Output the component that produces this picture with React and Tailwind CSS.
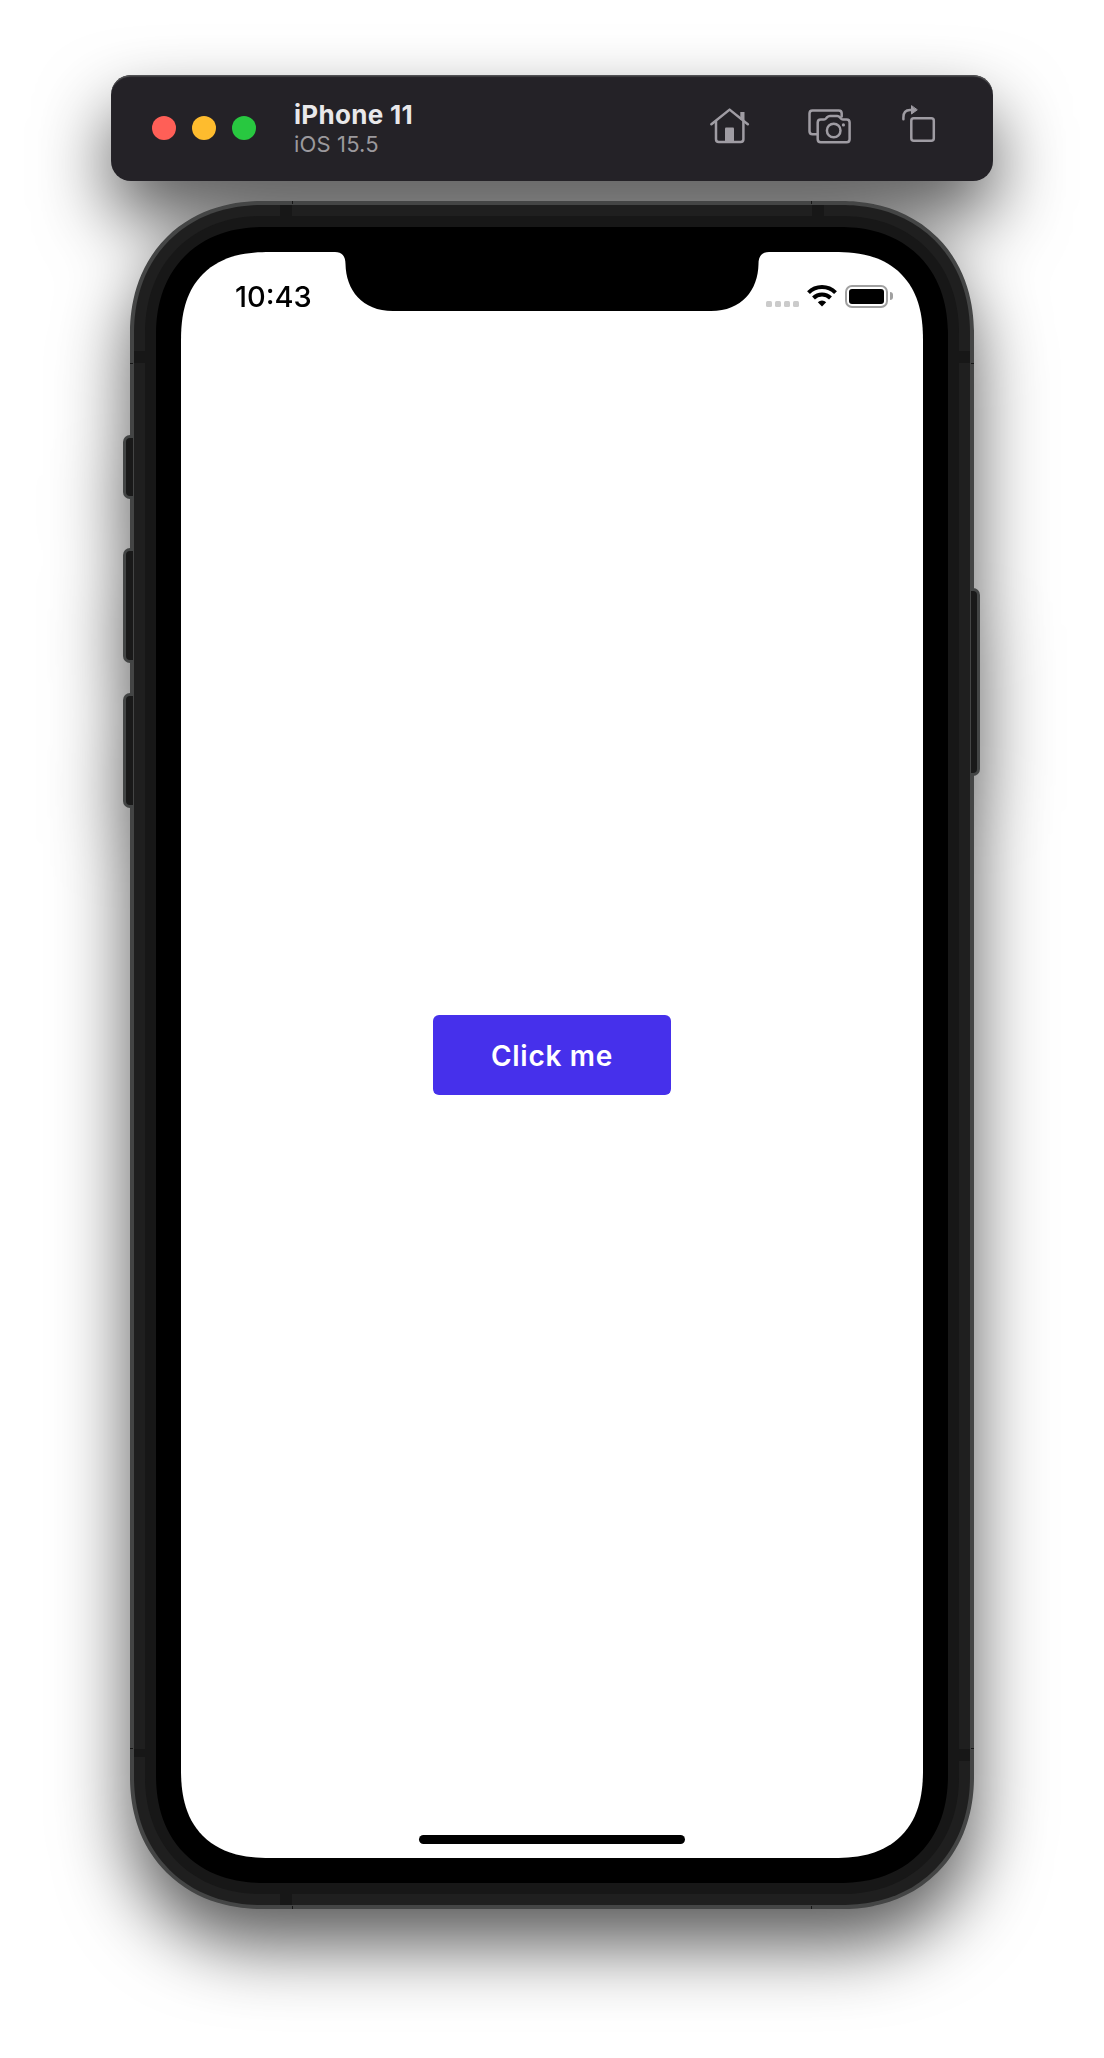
const ICON = "#9f9ca3";

function HomeIcon() {
  return (
    <svg width="40" height="38" viewBox="0 0 40 38" fill="none" stroke={ICON} strokeWidth="2.5" strokeLinecap="round" strokeLinejoin="round">
      <path d="M1.400 17.300 19.600 2.600 37.800 17.300" />
      <path d="M6 14.500v17.700q0 2.700 2.700 2.700h22q2.700 0 2.700-2.700V14.500" />
      <path d="M32.400 5v8" strokeWidth="4.200" strokeLinecap="butt" />
      <path d="M15 35V21.500q0-1 1-1h7q1 0 1 1V35z" fill={ICON} stroke="none" />
    </svg>
  );
}

function ScreenshotIcon() {
  return (
    <svg width="44" height="36" viewBox="0 0 44 36" fill="none" stroke={ICON} strokeWidth="2.500" strokeLinecap="round" strokeLinejoin="round">
      <path d="M9 26.300H4.500q-3 0-3-3V5.500q0-3 3-3h26.200q3 0 3 3v3" />
      <path d="M12.700 11.500h3.300q1.200 0 2-1l1.200-1.400Q20.400 7.900 22 7.900h7.200q1.500 0 2.500 1.200l1.200 1.400q.8 1 2 1H38.600q3 0 3 3V31.200q0 3-3 3H12.700q-3 0-3-3V14.500q0-3 3-3z" />
      <circle cx="25.700" cy="22.500" r="6.800" />
      <circle cx="35.400" cy="16.900" r="1.600" fill={ICON} stroke="none" />
    </svg>
  );
}

function RotateIcon() {
  return (
    <svg width="34" height="38" viewBox="0 0 34 38" fill="none" stroke={ICON} strokeWidth="2.500" strokeLinecap="round" strokeLinejoin="round">
      <rect x="9.300" y="13.300" width="22.500" height="22.500" rx="2.500" />
      <path d="M1.400 14.300v-1.800Q1.400 5 8 5h1.500" />
      <path d="M9.500 1v8l5.500-4z" fill={ICON} strokeWidth="1" />
    </svg>
  );
}

function WifiIcon() {
  return (
    <svg width="30" height="22" viewBox="0 0 30 22" fill="none" stroke="#000" strokeWidth="4">
      <path d="M1.500 7.700a19 19 0 0 1 27 0" />
      <path d="M6.500 13a12 12 0 0 1 17 0" />
      <path d="M10.800 17.200a6 6 0 0 1 8.400 0L15 21.500z" fill="#000" stroke="none" />
    </svg>
  );
}

function Toolbar() {
  return (
    <header className="flex h-[106px] w-[882px] items-center rounded-[20px] bg-[#242227] pl-[41px] shadow-[inset_0_2px_1px_-0.5px_#555557]">
      <div className="flex gap-4">
        <span className="size-6 rounded-full bg-[#ff5f57]" />
        <span className="size-6 rounded-full bg-[#febc2e]" />
        <span className="size-6 rounded-full bg-[#28c840]" />
      </div>
      <div className="mt-[2px] ml-[38px] flex w-[416px] flex-col">
        <h1 className="text-[26px] leading-[30px] font-bold tracking-[0.3px] text-[#e9e8ea]">iPhone 11</h1>
        <p className="text-[22px] leading-[29px] tracking-[0.15px] text-[#9b999d]">iOS 15.5</p>
      </div>
      <div className="flex items-start self-start">
        <div className="mt-[32px]"><HomeIcon /></div>
        <div className="mt-[33px] ml-[58px]"><ScreenshotIcon /></div>
        <div className="mt-[30px] ml-[50px]"><RotateIcon /></div>
      </div>
    </header>
  );
}

function SideButton({ className }) {
  return <span className={"absolute bg-[#191919] border-[3px] border-[#434545] " + className} />;
}

function Phone() {
  return (
    <div className="relative mt-5 h-[1708px] w-[844px]">
      <div className="relative h-full rounded-[124px] bg-[#444545] p-1 supports-[corner-shape:superellipse(1.1)]:rounded-[132px] supports-[corner-shape:superellipse(1.1)]:[corner-shape:superellipse(1.1)]">
        <div className="h-full rounded-[120px] bg-[#1f1f1f] p-[11px] supports-[corner-shape:superellipse(1.1)]:rounded-[128px] supports-[corner-shape:superellipse(1.1)]:[corner-shape:superellipse(1.1)]">
          <div className="h-full rounded-[109px] bg-[#171717] p-[11px] supports-[corner-shape:superellipse(1.1)]:rounded-[117px] supports-[corner-shape:superellipse(1.1)]:[corner-shape:superellipse(1.1)]">
            <div className="h-full rounded-[98px] bg-black p-[25px] supports-[corner-shape:superellipse(1.1)]:rounded-[108px] supports-[corner-shape:superellipse(1.1)]:[corner-shape:superellipse(1.15)]">
              <Screen />
            </div>
          </div>
        </div>
        <span className="absolute top-1 left-[150px] h-[11px] w-3 bg-[#171717]" />
        <span className="absolute top-1 right-[150px] h-[11px] w-3 bg-[#171717]" />
        <span className="absolute bottom-1 left-[150px] h-[11px] w-3 bg-[#171717]" />
        <span className="absolute top-[150px] left-1 h-3 w-[11px] bg-[#171717]" />
        <span className="absolute top-[150px] right-1 h-3 w-[11px] bg-[#171717]" />
        <span className="absolute bottom-[152px] left-1 h-2 w-[11px] bg-[#171717]" />
        <span className="absolute right-1 bottom-[148px] h-3 w-[11px] bg-[#171717]" />
        <span className="absolute top-0 left-[162px] h-[3px] w-px bg-[#171717]" />
        <span className="absolute top-0 right-[162px] h-[3px] w-px bg-[#171717]" />
        <span className="absolute bottom-0 left-[162px] h-[3px] w-px bg-[#171717]" />
        <span className="absolute right-[162px] bottom-0 h-[3px] w-px bg-[#171717]" />
        <span className="absolute top-[162px] left-0 h-px w-[3px] bg-[#171717]" />
        <span className="absolute top-[162px] right-0 h-px w-[3px] bg-[#171717]" />
        <span className="absolute bottom-[160px] left-0 h-px w-[3px] bg-[#171717]" />
        <span className="absolute right-0 bottom-[160px] h-px w-[3px] bg-[#171717]" />
      </div>
      <SideButton className="top-[234px] left-[-7px] h-[64px] w-[10px] rounded-l-[7px] border-r-0" />
      <SideButton className="top-[347px] left-[-7px] h-[115px] w-[10px] rounded-l-[7px] border-r-0" />
      <SideButton className="top-[492px] left-[-7px] h-[115px] w-[10px] rounded-l-[7px] border-r-0" />
      <SideButton className="top-[387px] right-[-6px] h-[188px] w-[9px] rounded-r-[7px] border-l-0" />
    </div>
  );
}

function Screen() {
  return (
    <main className="relative flex h-full flex-col overflow-hidden rounded-[74px] bg-white supports-[corner-shape:superellipse(1.1)]:rounded-[89px] supports-[corner-shape:superellipse(1.1)]:[corner-shape:superellipse(1.29)]">
      <div className="flex h-[88px] justify-between pr-[30px] pl-[54px]">
        <time className="mt-[26px] text-[29px] leading-[38px] font-medium text-black">10:43</time>
        <div className="mt-[32px] flex h-[24px] items-center">
          <div className="mt-[15px] flex gap-[3px]">
            <span className="size-[6px] rounded-[1.500px] bg-[#cbcbcb]" />
            <span className="size-[6px] rounded-[1.500px] bg-[#cbcbcb]" />
            <span className="size-[6px] rounded-[1.500px] bg-[#cbcbcb]" />
            <span className="size-[6px] rounded-[1.500px] bg-[#cbcbcb]" />
          </div>
          <div className="ml-2"><WifiIcon /></div>
          <div className="ml-2 h-[23px] w-[43px] rounded-[7px] border-2 border-[#a0a0a0] p-[2px]">
            <div className="h-full rounded-[3px] bg-black" />
          </div>
          <span className="ml-[2px] h-[8px] w-[3px] rounded-r-full bg-[#a0a0a0]" />
        </div>
      </div>
      <svg className="absolute top-0 left-[154px]" width="434" height="60" viewBox="0 0 434 60">
        <path d="M0 0C7 0 10.500 4 10.500 12C11 38 27 59 58 59H376C407 59 423 38 423.500 12C423.500 4 427 0 434 0Z" fill="#000" />
      </svg>
      <button className="absolute top-[763px] left-[252px] h-[80px] w-[238px] rounded-[6px] bg-[#4630eb] pt-px text-[28px] font-semibold tracking-[0.7px] text-white">Click me</button>
      <span className="absolute bottom-[14px] left-[238px] h-[9px] w-[266px] rounded-full bg-black" />
    </main>
  );
}

export default function App() {
  return (
    <div className="flex h-[2058px] w-[1104px] justify-center overflow-hidden bg-white pt-[75px] font-['Inter',sans-serif]">
      <div className="flex flex-col items-center [filter:drop-shadow(0_36px_36px_rgba(0,0,0,0.65))]">
        <Toolbar />
        <Phone />
      </div>
    </div>
  );
}
